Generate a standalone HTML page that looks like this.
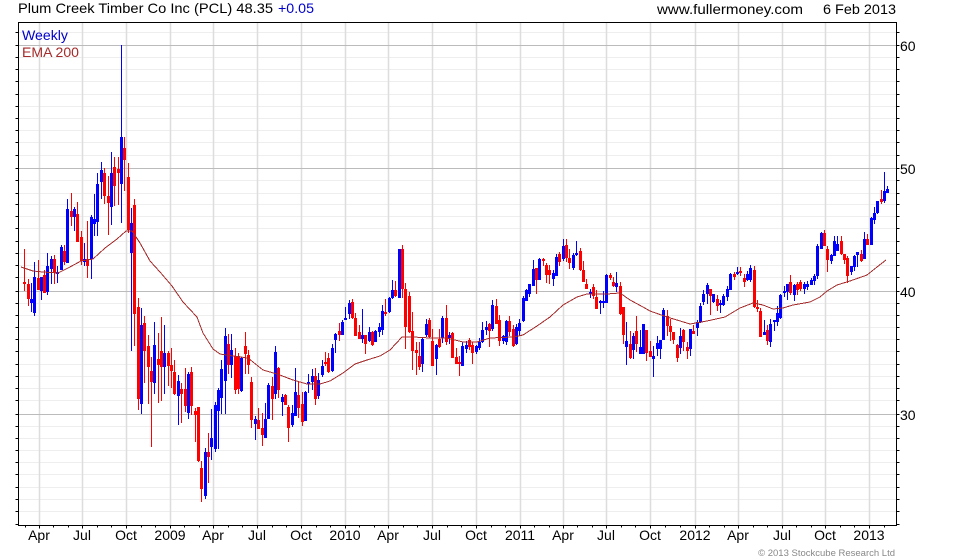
<!DOCTYPE html>
<html><head><meta charset="utf-8"><style>
html,body{margin:0;padding:0;background:#fff}
svg{display:block}
text{font-family:"Liberation Sans",Arial,sans-serif;font-size:14px;fill:#000}
</style></head><body>
<svg width="980" height="560" viewBox="0 0 980 560" xmlns="http://www.w3.org/2000/svg">
<rect width="980" height="560" fill="#fff"/>
<g transform="translate(0,.5)" shape-rendering="crispEdges">
<path fill="none" stroke="#eeeeee" stroke-width="1" d="M19 32H896M19 57H896M19 69H896M19 81H896M19 94H896M19 106H896M19 118H896M19 130H896M19 142H896M19 155H896M19 180H896M19 193H896M19 204H896M19 216H896M19 228H896M19 241H896M19 253H896M19 265H896M19 277H896M19 303H896M19 315H896M19 327H896M19 339H896M19 351H896M19 364H896M19 376H896M19 388H896M19 400H896M19 426H896M19 438H896M19 450H896M19 462H896M19 474H896M19 487H896M19 499H896M19 511H896"/>
</g>
<path fill="none" stroke="#dddddd" stroke-width="1.5" d="M39.5 23V525M82.5 23V525M126.5 23V525M170.5 23V525M213.5 23V525M257.5 23V525M301.5 23V525M345.5 23V525M388.5 23V525M432.5 23V525M476.5 23V525M520.5 23V525M563.5 23V525M606.5 23V525M650.5 23V525M695.5 23V525M738.5 23V525M782.5 23V525M825.5 23V525M869.5 23V525"/>
<g transform="translate(0,.5)" shape-rendering="crispEdges">
<path fill="none" stroke="#bbbbbb" stroke-width="1" d="M19 45H896M19 168H896M19 291H896M19 414H896"/>
</g>
<g transform="translate(.5,0)" shape-rendering="crispEdges" fill="none">
<path stroke="#0000ff" stroke-width="1" d="M31 283V312M34 262V316M41 277V300M47 253V295M51 256V284M57 266V283M61 245V270M67 199V263M74 207V231M84 243V266M91 215V279M94 194V236M97 173V236M101 162V199M111 152V225M121 45V223M131 208V351M141 308V414M154 322V394M164 325V394M178 375V425M188 372V419M205 448V499M211 409V460M215 402V452M218 388V449M221 360V414M225 328V414M231 334V378M241 357V392M255 416V440M265 403V438M268 383V419M275 346V399M282 394V416M292 405V427M295 368V416M305 391V421M308 374V393M312 369V390M318 373V399M322 360V377M332 344V372M335 333V353M342 320V335M345 307V320M349 300V319M362 309V343M369 327V342M375 330V342M379 323V337M382 305V335M389 297V313M392 280V299M399 249V298M422 337V372M426 319V337M436 344V375M442 316V343M449 332V344M462 342V366M466 341V353M476 345V354M479 338V350M482 322V343M486 321V335M492 300V331M503 335V344M506 320V345M516 324V345M519 319V336M523 296V322M526 289V301M529 284V297M533 260V286M539 258V280M553 270V286M556 254V276M563 239V261M573 253V270M576 241V256M590 289V298M600 300V314M603 291V308M606 274V303M616 272V292M626 322V365M633 333V359M640 330V354M643 324V354M653 346V377M657 336V356M660 340V359M663 308V340M680 328V354M690 329V356M697 320V336M700 303V323M703 290V305M707 283V304M713 294V303M720 300V313M723 294V306M727 286V301M730 273V290M737 267V275M747 271V281M750 265V282M764 320V335M770 319V347M774 320V331M777 306V326M780 294V319M784 286V297M787 284V300M794 284V301M804 282V294M807 281V290M811 278V285M814 274V285M817 244V279M821 232V249M831 254V264M834 236V256M837 236V251M851 266V275M854 255V271M857 252V267M864 232V259M871 217V245M874 207V224M877 201V214M884 172V203M887 186V193"/>
<path stroke="#0000ff" stroke-width="3" d="M31 299V303M34 277V313M41 277V291M47 266V292M51 259V269M57 272V274M61 247V270M67 209V263M74 209V217M84 259V262M91 217V259M94 219V224M97 184V222M101 170V182M111 173V207M121 137V184M131 223V253M141 325V404M154 345V383M164 353V367M178 381V396M188 374V413M205 452V496M211 438V447M215 405V449M218 390V411M221 369V398M225 336V381M231 350V365M241 358V391M255 419V424M265 419V438M268 385V419M275 352V394M282 397V402M292 413V425M295 392V416M305 392V421M308 382V384M312 376V382M318 380V396M322 366V375M332 348V371M335 334V340M342 322V335M345 318V320M349 303V314M362 335V339M369 332V341M375 331V342M379 327V332M382 311V330M389 298V312M392 290V298M399 249V298M422 339V364M426 324V335M436 345V359M442 318V338M449 335V338M462 346V366M466 345V349M476 346V352M479 342V348M482 330V342M486 327V330M492 305V329M503 336V341M506 321V342M516 327V344M519 323V331M523 298V321M526 290V301M529 284V294M533 269V286M539 259V280M553 273V279M556 257V276M563 246V259M573 255V268M576 253V255M590 292V294M600 301V303M603 301V303M606 275V303M616 283V287M626 341V347M633 336V350M640 347V354M643 324V354M653 356V359M657 343V349M660 340V349M663 310V340M680 336V348M690 329V349M697 322V328M700 306V322M703 294V302M707 285V294M713 294V302M720 303V305M723 296V305M727 289V297M730 274V290M737 272V274M747 274V280M750 268V280M764 332V335M770 324V342M774 320V322M777 313V322M780 295V318M784 291V293M787 284V292M794 285V295M804 284V289M807 284V287M811 280V285M814 276V281M817 246V276M821 233V249M831 255V261M834 241V256M837 244V251M851 266V272M854 256V267M857 252V255M864 239V259M871 218V245M874 213V220M877 201V213M884 191V201M887 189V193"/>
<path stroke="#ff0000" stroke-width="1" d="M24 249V291M28 279V306M38 260V290M44 270V293M54 255V284M64 245V265M71 193V226M77 202V242M81 231V265M87 221V278M104 168V204M108 176V235M114 157V206M118 157V205M124 137V191M128 163V233M134 199V346M138 298V410M144 316V383M148 335V404M151 357V447M158 333V403M161 317V401M168 351V386M171 348V388M174 360V395M181 383V423M185 368V412M191 367V415M195 408V442M198 407V462M201 461V502M208 433V483M228 334V374M235 348V394M238 353V394M245 332V374M248 350V374M251 377V428M258 408V429M262 413V446M272 377V420M278 367V398M285 394V405M288 405V442M298 381V418M302 392V426M315 368V405M325 352V366M328 353V373M339 323V341M352 299V319M355 313V336M359 325V339M365 335V354M372 331V346M385 299V316M395 281V297M402 245V298M405 283V349M409 292V333M412 312V370M416 342V375M419 342V370M429 318V338M432 329V366M439 329V348M446 305V345M452 332V358M456 348V364M459 356V376M469 338V350M472 342V364M489 323V347M496 299V324M499 315V346M509 316V336M513 325V347M536 268V294M543 258V266M546 263V283M549 265V284M559 252V266M566 239V262M569 249V269M580 248V271M583 261V282M586 279V289M593 284V299M596 290V309M610 273V280M613 277V287M620 282V315M623 307V344M630 331V359M636 316V352M646 330V361M650 341V357M667 310V336M670 319V341M673 332V344M677 344V362M683 329V351M687 342V359M693 325V334M710 289V315M717 295V311M734 272V280M740 267V276M744 274V287M754 266V308M757 300V312M760 308V337M767 325V345M790 275V295M797 282V295M800 280V291M824 230V246M827 246V272M841 236V255M844 254V264M847 256V283M861 250V262M867 234V245M881 190V204"/>
<path stroke="#ff0000" stroke-width="3" d="M24 282V284M28 284V299M38 278V290M44 275V293M54 259V273M64 251V262M71 211V217M77 214V242M81 237V261M87 259V266M104 173V196M108 196V203M114 167V186M118 169V173M124 148V160M128 177V230M134 205V314M138 307V399M144 323V351M148 346V367M151 371V382M158 359V365M161 351V367M168 353V366M171 365V371M174 372V394M181 389V394M185 389V406M191 372V406M195 411V415M198 407V461M201 468V489M208 452V457M228 344V365M235 356V390M238 356V389M245 346V354M248 355V365M251 382V420M258 420V429M262 428V435M272 386V399M278 368V390M285 395V405M288 407V428M298 395V408M302 404V422M315 376V399M325 362V364M328 358V372M339 331V335M352 302V318M355 318V336M359 332V339M365 335V344M372 332V345M385 312V314M395 290V296M402 249V289M405 289V327M409 296V332M412 331V351M416 350V353M419 356V367M429 320V337M432 341V366M439 339V347M446 318V342M452 333V358M456 357V364M459 362V364M469 340V347M472 345V353M489 324V331M496 306V324M499 320V341M509 321V332M513 329V346M536 268V280M543 259V261M546 265V275M549 270V275M559 254V262M566 245V258M569 258V263M580 251V270M583 270V282M586 284V289M593 287V296M596 297V309M610 275V278M613 282V286M620 286V314M623 307V335M630 344V358M636 331V344M646 330V353M650 351V357M667 316V326M670 326V332M673 332V340M677 345V358M683 330V342M687 347V351M693 331V334M710 289V296M717 299V306M734 274V277M740 271V273M744 278V282M754 270V307M757 307V309M760 311V337M767 330V341M790 282V293M797 284V290M800 282V289M824 233V246M827 249V260M841 241V254M844 254V260M847 258V276M861 254V261M867 239V245M881 199V202"/>
</g>
<polyline fill="none" stroke="#a52a2a" stroke-width="1" shape-rendering="crispEdges" points="21,267 27,269 33,271 43,272 58,273 68,268 81,261 93,259 105,248 117,239 126,231 132,231 140,243 150,261 160,272 172,286 183,302 197,317 203,333 213,349 220,354 233,356 248,358 263,370 277,374 293,380 307,384 320,384 330,381 343,373 355,364 367,360 380,356 390,350 402,337 413,337 430,338 447,338 463,342 477,342 490,338 513,337 523,335 537,326 550,317 563,305 577,297 587,294 607,294 620,293 630,300 643,307 650,311 667,317 690,324 707,321 725,317 740,308 753,303 763,305 773,309 783,308 793,305 810,302 820,297 827,291 837,285 850,281 867,275 877,267 886,260"/>
<g shape-rendering="crispEdges" fill="none" stroke="#000" stroke-width="1" transform="translate(.5,.5)">
<path d="M18 22H896V525H18Z"/>
<path d="M15 32H18M15 45H18M15 57H18M15 69H18M15 81H18M15 94H18M15 106H18M15 118H18M15 130H18M15 142H18M15 155H18M15 168H18M15 180H18M15 193H18M15 204H18M15 216H18M15 228H18M15 241H18M15 253H18M15 265H18M15 277H18M15 291H18M15 303H18M15 315H18M15 327H18M15 339H18M15 351H18M15 364H18M15 376H18M15 388H18M15 400H18M15 414H18M15 426H18M15 438H18M15 450H18M15 462H18M15 474H18M15 487H18M15 499H18M15 511H18M15 524H18"/>
<path d="M896 32H899M896 45H899M896 57H899M896 69H899M896 81H899M896 94H899M896 106H899M896 118H899M896 130H899M896 142H899M896 155H899M896 168H899M896 180H899M896 193H899M896 204H899M896 216H899M896 228H899M896 241H899M896 253H899M896 265H899M896 277H899M896 291H899M896 303H899M896 315H899M896 327H899M896 339H899M896 351H899M896 364H899M896 376H899M896 388H899M896 400H899M896 414H899M896 426H899M896 438H899M896 450H899M896 462H899M896 474H899M896 487H899M896 499H899M896 511H899M896 524H899"/>
<path d="M25 525V527M39 525V528M53 525V527M68 525V527M82 525V528M97 525V527M111 525V527M126 525V528M141 525V527M155 525V527M170 525V528M184 525V527M199 525V527M213 525V528M228 525V527M242 525V527M257 525V528M272 525V527M286 525V527M301 525V528M316 525V527M330 525V527M345 525V528M359 525V527M374 525V527M388 525V528M403 525V527M417 525V527M432 525V528M447 525V527M461 525V527M476 525V528M491 525V527M505 525V527M520 525V528M534 525V527M549 525V527M563 525V528M577 525V527M592 525V527M606 525V528M621 525V527M635 525V527M650 525V528M665 525V527M680 525V527M695 525V528M709 525V527M724 525V527M738 525V528M753 525V527M767 525V527M782 525V528M796 525V527M811 525V527M825 525V528M840 525V527M854 525V527M869 525V528M884 525V527"/>
</g>
<text x="18" y="13" textLength="255" lengthAdjust="spacingAndGlyphs">Plum Creek Timber Co Inc (PCL) 48.35</text>
<text x="278" y="13" textLength="36" lengthAdjust="spacingAndGlyphs" style="fill:#0000cc">+0.05</text>
<text x="657" y="14" textLength="146" lengthAdjust="spacingAndGlyphs">www.fullermoney.com</text>
<text x="823" y="14" textLength="73" lengthAdjust="spacingAndGlyphs">6 Feb 2013</text>
<text x="22" y="40" textLength="46" lengthAdjust="spacingAndGlyphs" style="fill:#0000cc">Weekly</text>
<text x="22" y="57" textLength="57" lengthAdjust="spacingAndGlyphs" style="fill:#a52a2a">EMA 200</text>
<g>
<text x="900" y="51">60</text><text x="900" y="174">50</text><text x="900" y="297">40</text><text x="900" y="420">30</text>
</g>
<g text-anchor="middle">
<text x="39" y="540">Apr</text><text x="82" y="540">Jul</text><text x="126" y="540">Oct</text><text x="170" y="540">2009</text><text x="213" y="540">Apr</text><text x="257" y="540">Jul</text><text x="301" y="540">Oct</text><text x="345" y="540">2010</text><text x="388" y="540">Apr</text><text x="432" y="540">Jul</text><text x="476" y="540">Oct</text><text x="520" y="540">2011</text><text x="563" y="540">Apr</text><text x="606" y="540">Jul</text><text x="650" y="540">Oct</text><text x="695" y="540">2012</text><text x="738" y="540">Apr</text><text x="782" y="540">Jul</text><text x="825" y="540">Oct</text><text x="869" y="540">2013</text>
</g>
<text x="895" y="556" text-anchor="end" style="font-size:9.5px;fill:#888">© 2013 Stockcube Research Ltd</text>
</svg>
</body></html>
